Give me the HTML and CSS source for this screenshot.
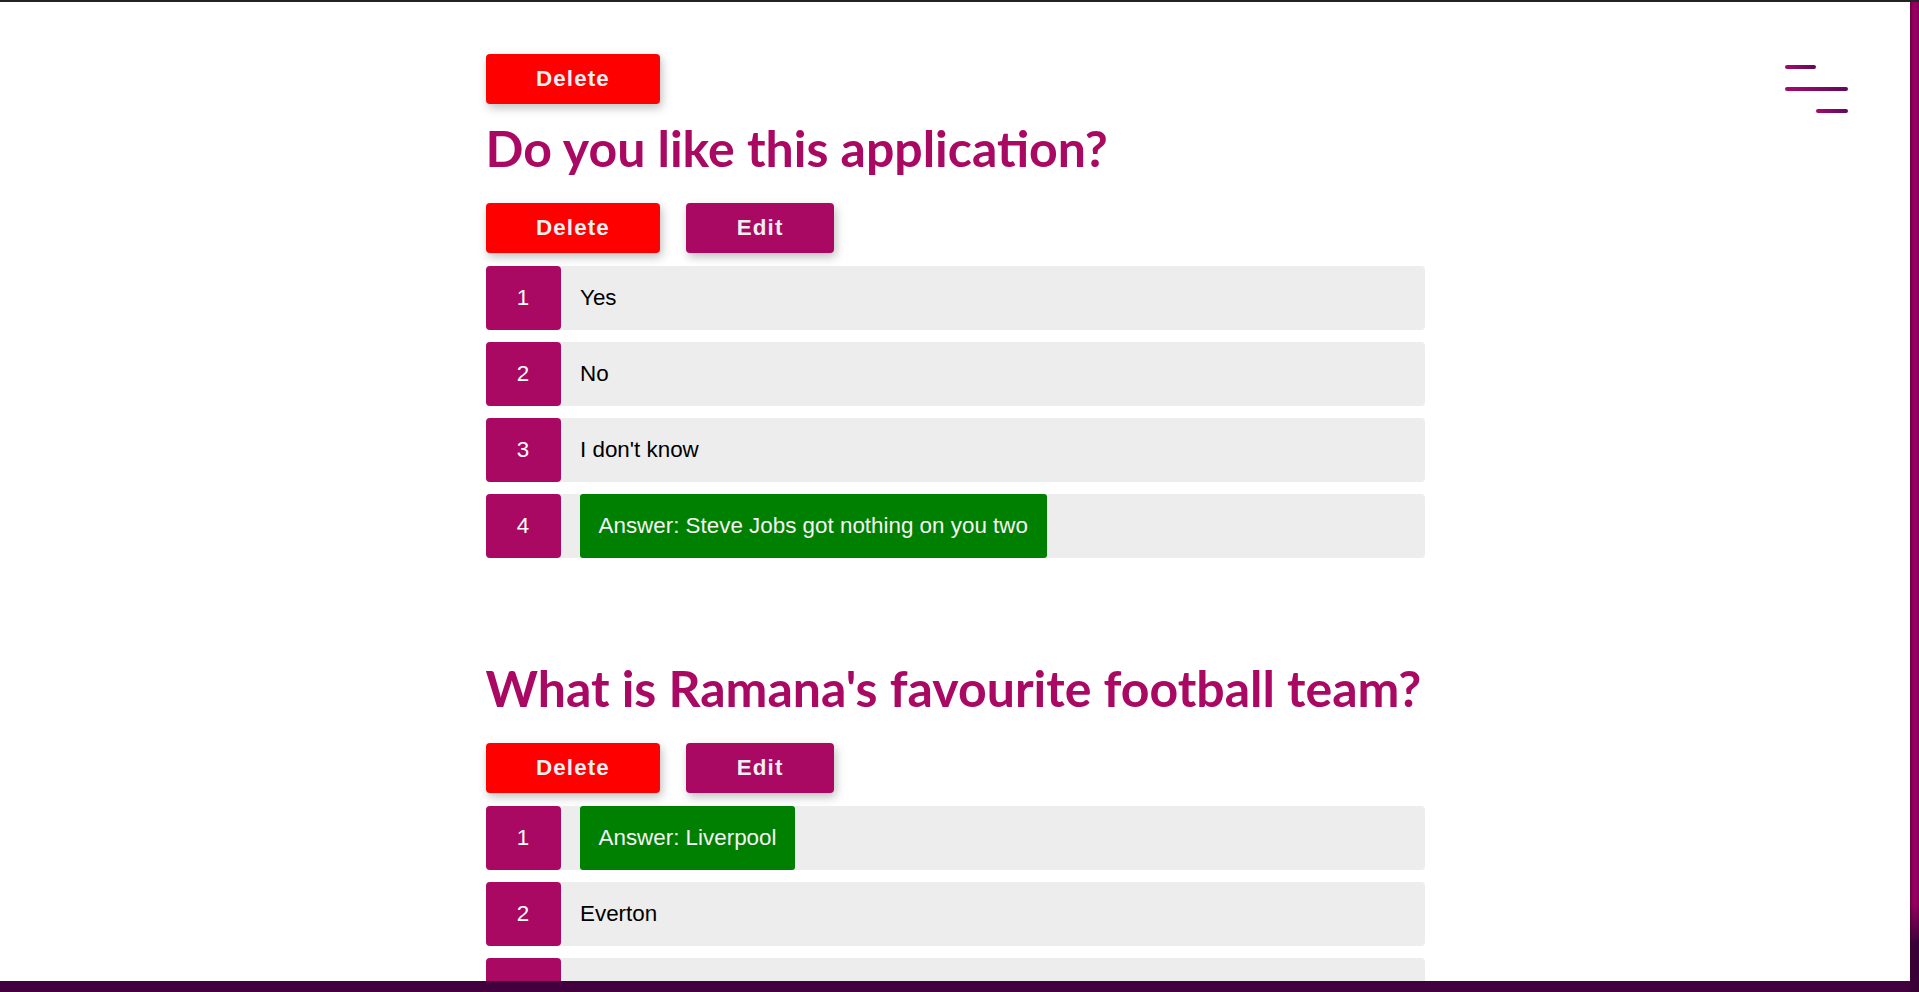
FILE: index.html
```html
<!DOCTYPE html>
<html lang="en">
<head>
<meta charset="utf-8">
<title>Quiz admin</title>
<link rel="stylesheet" href="styles.css">
</head>
<body>
<div class="topline"></div>
<main class="viewport">
  <nav class="menu" aria-label="Menu">
    <span class="bar bar-first"></span>
    <span class="bar bar-long"></span>
    <span class="bar bar-last"></span>
  </nav>
  <div class="container">
    <div class="quiz-actions">
      <button class="btn btn-delete">Delete</button>
    </div>
    <section class="question">
      <h1 class="question-title">Do you like this application?</h1>
      <div class="actions">
        <button class="btn btn-delete">Delete</button>
        <button class="btn btn-edit">Edit</button>
      </div>
      <ol class="answers">
        <li class="answer"><span class="num">1</span><span class="label">Yes</span></li>
        <li class="answer"><span class="num">2</span><span class="label">No</span></li>
        <li class="answer"><span class="num">3</span><span class="label">I don't know</span></li>
        <li class="answer"><span class="num">4</span><span class="label correct">Answer: Steve Jobs got nothing on you two</span></li>
      </ol>
    </section>
    <section class="question">
      <h1 class="question-title">What is Ramana's favourite football team?</h1>
      <div class="actions">
        <button class="btn btn-delete">Delete</button>
        <button class="btn btn-edit">Edit</button>
      </div>
      <ol class="answers">
        <li class="answer"><span class="num">1</span><span class="label correct">Answer: Liverpool</span></li>
        <li class="answer"><span class="num">2</span><span class="label">Everton</span></li>
        <li class="answer"><span class="num">3</span><span class="label">Manchester United</span></li>
      </ol>
    </section>
  </div>
</main>
<div class="vscroll"><div class="thumb"></div></div>
<div class="hbar"></div>
</body>
</html>
```

FILE: styles.css
```css
html, body {
  margin: 0;
  padding: 0;
  height: 100%;
}

body {
  display: grid;
  grid-template-columns: 1fr 9px;
  grid-template-rows: 2px 1fr 11px;
  height: 100vh;
  overflow: hidden;
  background: #ffffff;
  font-family: "Liberation Sans", Arial, sans-serif;
}

.topline {
  grid-column: 1 / -1;
  grid-row: 1;
  background: #232323;
}

.viewport {
  grid-column: 1;
  grid-row: 2;
  position: relative;
  overflow: hidden;
  background: #ffffff;
}

.vscroll {
  grid-column: 2;
  grid-row: 2 / 4;
  background: #380034;
}

.thumb {
  height: 939px;
  border-radius: 0 0 3px 3px;
  background:
    linear-gradient(to bottom, rgba(56, 0, 52, 0) 96%, rgba(56, 0, 52, 0.9) 100%),
    linear-gradient(to right, #6a0046 0%, #95005f 35%, #9a0062 60%, #860058 100%);
}

.hbar {
  grid-column: 1;
  grid-row: 3;
  background: #42003e;
}

/* menu */
.menu {
  position: absolute;
  top: 63px;
  right: 62px;
  width: 63px;
  display: flex;
  flex-direction: column;
  gap: 18px;
}

.bar {
  display: block;
  height: 4px;
  border-radius: 2px;
  background: linear-gradient(to right, #a70a6b, #5e0a5c);
}

.bar-first { width: 31px; align-self: flex-start; }
.bar-long { width: 63px; }
.bar-last { width: 32px; align-self: flex-end; }

/* content */
.container {
  width: 939px;
  margin: 0 auto;
  padding-top: 52px;
}

.quiz-actions {
  display: flex;
}

.btn {
  height: 50px;
  padding: 0 50.5px;
  border: none;
  border-radius: 4px;
  font-family: "Liberation Sans", Arial, sans-serif;
  font-size: 22.4px;
  font-weight: 700;
  letter-spacing: 1.1px;
  color: #f0eef0;
  box-shadow: 2px 4px 10px rgba(0, 0, 0, 0.25);
  cursor: pointer;
}

.btn-delete { background: #ff0000; }
.btn-edit { background: #a90963; }

.question {
  padding-top: 14px;
}

.question + .question {
  padding-top: 100px;
}

.question-title {
  margin: 0 0 25px;
  font-family: "Lato", "Open Sans", sans-serif;
  font-weight: 700;
  font-size: 50px;
  line-height: 60px;
  color: #a90963;
  white-space: nowrap;
}

.actions {
  display: flex;
  gap: 26px;
  margin-bottom: 13px;
}

.answers {
  list-style: none;
  margin: 0;
  padding: 0;
  display: flex;
  flex-direction: column;
  gap: 12px;
}

.answer {
  display: flex;
  align-items: center;
  height: 64px;
  background: #ededed;
  border-radius: 4px;
  font-size: 22.4px;
  color: #000000;
}

.num {
  align-self: stretch;
  width: 75px;
  flex: none;
  display: flex;
  align-items: center;
  justify-content: center;
  background: #a90963;
  color: #ffffff;
  border-radius: 4px;
}

.label {
  margin-left: 19.5px;
}

.label.correct {
  align-self: stretch;
  display: flex;
  align-items: center;
  margin-left: 19px;
  padding: 0 19px;
  background: #008000;
  color: #f4f4f4;
  border-radius: 3px;
}
```
